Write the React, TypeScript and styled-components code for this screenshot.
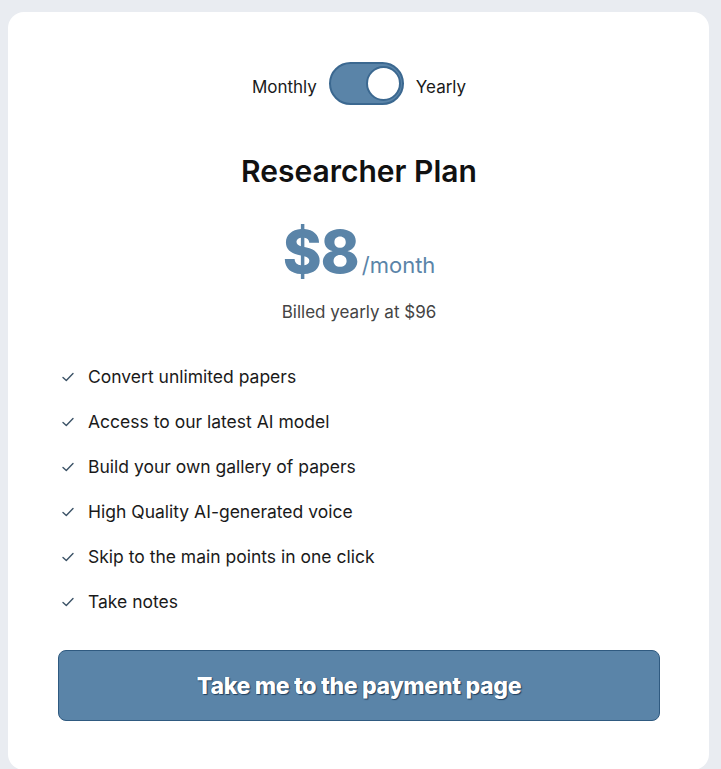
import React, { useState } from 'react'
import styled, { createGlobalStyle } from 'styled-components'

const GlobalStyle = createGlobalStyle`
  html, body {
    margin: 0;
    padding: 0;
    background: #e9ecf1;
  }
  body {
    padding: 12px 12px 0 8px;
    font-family: Inter, "Noto Sans", Arial, sans-serif;
    color: #1c1c1c;
  }
`

const Card = styled.div`
  background: #ffffff;
  border-radius: 16px;
  padding: 50px 49px 48px 50px;
  min-height: 660px;
`

const ToggleRow = styled.div`
  display: flex;
  align-items: center;
  justify-content: center;
  gap: 12px;
  font-size: 17px;
  color: #1a1a1a;
`

const Label = styled.span`
  padding-top: 6px;
`

const Switch = styled.button<{ $on: boolean }>`
  position: relative;
  width: 75px;
  height: 43px;
  border-radius: 22px;
  border: 2px solid #3b6890;
  background: #5a84a8;
  padding: 0;
  cursor: pointer;
`

const Knob = styled.span<{ $on: boolean }>`
  position: absolute;
  top: 2px;
  left: ${({ $on }) => ($on ? '35px' : '2px')};
  width: 35px;
  height: 35px;
  border-radius: 50%;
  background: #ffffff;
  border: 2px solid #3b6890;
  box-sizing: border-box;
`

const Title = styled.h2`
  margin: 49px 0 0;
  text-align: center;
  font-size: 30px;
  font-weight: 600;
  color: #111;
  line-height: 34px;
`

const PriceRow = styled.div`
  display: flex;
  justify-content: center;
  align-items: baseline;
  margin-top: 32px;
  color: #5a84a8;
`

const Amount = styled.span`
  font-size: 59px;
  font-weight: 800;
  line-height: 64px;
  letter-spacing: -1px;
`

const Per = styled.span`
  font-size: 22px;
  margin-left: 3px;
`

const Billed = styled.div`
  text-align: center;
  margin-top: 18px;
  font-size: 17px;
  color: #444;
`

const Features = styled.ul`
  list-style: none;
  margin: 44px 0 0;
  padding: 0 0 0 4px;
  display: flex;
  flex-direction: column;
  gap: 24px;
`

const Feature = styled.li`
  display: flex;
  align-items: center;
  gap: 14px;
  font-size: 17.5px;
  line-height: 21px;
  color: #1a1a1a;
`

const Button = styled.button`
  display: block;
  width: 100%;
  height: 71px;
  margin-top: 38px;
  background: #5a84a8;
  border: 1px solid #2f5a80;
  border-radius: 8px;
  color: #ffffff;
  font-family: Inter, "Noto Sans", Arial, sans-serif;
  font-size: 23px;
  font-weight: 800;
  letter-spacing: -0.3px;
  text-shadow: 1px 1px 1px #1f3f5e, -0.5px -0.5px 0 #2a4d70;
  cursor: pointer;
`

const Check = () => (
  <svg width="12" height="10" viewBox="0 0 12 10" fill="none">
    <path d="M1 5.5 L4.3 8.5 L11 1.5" stroke="#3b5266" strokeWidth="1.4" strokeLinecap="round" strokeLinejoin="round" />
  </svg>
)

const features = [
  'Convert unlimited papers',
  'Access to our latest AI model',
  'Build your own gallery of papers',
  'High Quality AI-generated voice',
  'Skip to the main points in one click',
  'Take notes',
]

const App = () => {
  const [yearly, setYearly] = useState(true)

  return (
    <>
      <GlobalStyle />
      <Card>
        <ToggleRow>
          <Label>Monthly</Label>
          <Switch $on={yearly} onClick={() => setYearly(!yearly)} aria-label="billing period">
            <Knob $on={yearly} />
          </Switch>
          <Label>Yearly</Label>
        </ToggleRow>

        <Title>Researcher Plan</Title>

        <PriceRow>
          <Amount>{yearly ? '$8' : '$10'}</Amount>
          <Per>/month</Per>
        </PriceRow>
        <Billed>{yearly ? 'Billed yearly at $96' : 'Billed monthly'}</Billed>

        <Features>
          {features.map((f) => (
            <Feature key={f}>
              <Check />
              {f}
            </Feature>
          ))}
        </Features>

        <Button>Take me to the payment page</Button>
      </Card>
    </>
  )
}

export default App
